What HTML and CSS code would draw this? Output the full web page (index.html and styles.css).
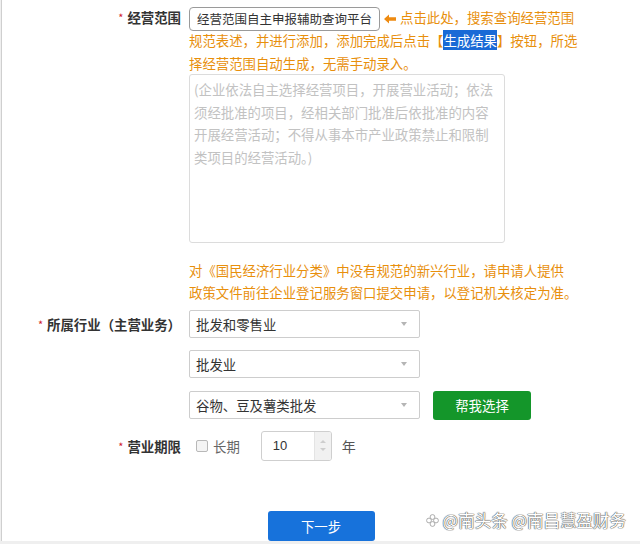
FILE: index.html
```html
<!DOCTYPE html>
<html lang="zh-CN">
<head>
<meta charset="utf-8">
<title>经营范围</title>
<link rel="stylesheet" href="styles.css">
</head>
<body>
<div class="page">
  <div class="row row-scope">
    <div class="label label-scope"><span class="req">*</span>经营范围</div>
    <div class="field">
      <p class="tip"><span class="platform">经营范围自主申报辅助查询平台</span><svg class="arrow" width="12" height="10" viewBox="0 0 12 10"><polygon points="0,5 5,0.5 5,3.2 12,3.2 12,6.8 5,6.8 5,9.5" fill="#ee8a10"/></svg>点击此处，搜索查询经营范围规范表述，并进行添加，添加完成后点击【<span class="hl">生成结果</span>】按钮，所选择经营范围自动生成，无需手动录入。</p>
      <textarea class="scope" placeholder="(企业依法自主选择经营项目，开展营业活动；依法须经批准的项目，经相关部门批准后依批准的内容开展经营活动；不得从事本市产业政策禁止和限制类项目的经营活动。)"></textarea>
      <p class="note">对《国民经济行业分类》中没有规范的新兴行业，请申请人提供<br>政策文件前往企业登记服务窗口提交申请，以登记机关核定为准。</p>
    </div>
  </div>

  <div class="row row-industry">
    <div class="label label-industry"><span class="req">*</span>所属行业（主营业务）</div>
    <div class="field selects">
      <div class="select"><span>批发和零售业</span><span class="caret"></span></div>
      <div class="select"><span>批发业</span><span class="caret"></span></div>
      <div class="select-line">
        <div class="select"><span>谷物、豆及薯类批发</span><span class="caret"></span></div>
        <div class="btn-green">帮我选择</div>
      </div>
    </div>
  </div>

  <div class="row row-term">
    <div class="label label-term"><span class="req">*</span>营业期限</div>
    <div class="field term">
      <span class="checkbox"></span>
      <span class="long">长期</span>
      <div class="number">
        <span class="num-val">10</span>
        <span class="spinner"><span class="up"></span><span class="down"></span></span>
      </div>
      <span class="year">年</span>
    </div>
  </div>

  <div class="btn-next">下一步</div>

  <div class="watermark"><svg class="wm-icon" width="13" height="13" viewBox="0 0 13 13"><g fill="#fff" stroke="#999" stroke-width="0.8"><circle cx="6.5" cy="3" r="2.4"/><circle cx="3" cy="6.5" r="2.4"/><circle cx="10" cy="6.5" r="2.4"/><circle cx="6.5" cy="10" r="2.4"/></g></svg><span>@南头条 @南昌慧盈财务</span></div>
</div>
</body>
</html>
```
FILE: styles.css
```css
html {
  background: #efefef;
}
body {
  margin: 0;
  font-family: "Noto Sans CJK SC", "Noto Sans", sans-serif;
  font-size: 13.4px;
  color: #333;
}
.page {
  position: relative;
  margin-left: 1px;
  border-left: 1px solid #cfcfcf;
  background: #fff;
  height: 541px;
  box-sizing: border-box;
  padding-top: 6px;
}
.row {
  display: grid;
  grid-template-columns: 179px 1fr;
  column-gap: 8px;
}
.label {
  text-align: right;
  font-weight: bold;
  color: #333;
  white-space: nowrap;
}
.req {
  color: #d0202a;
  font-weight: normal;
  font-size: 11px;
  margin-right: 4px;
  vertical-align: 1px;
}
.label-scope {
  line-height: 22.5px;
}
.tip {
  margin: 0;
  width: 394px;
  line-height: 22.5px;
  color: #e88f0c;
}
.platform {
  display: inline-block;
  box-sizing: border-box;
  height: 24px;
  line-height: 22px;
  padding: 0 7px;
  border: 1px solid #9a9a9a;
  border-radius: 4px;
  color: #333;
  font-size: 12.5px;
  vertical-align: middle;
  margin: -2px 4px -2px 0;
}
.arrow {
  vertical-align: -1px;
  margin-right: 4px;
}
.hl {
  background: #1a6ad6;
  color: #fff;
}
.scope {
  display: block;
  box-sizing: border-box;
  width: 316px;
  height: 169px;
  margin: 0;
  border: 1px solid #dcdcdc;
  border-radius: 3px;
  padding: 3px 4px;
  font-family: "Noto Sans CJK SC", sans-serif;
  font-size: 13.4px;
  line-height: 22.5px;
  color: #333;
  resize: none;
}
.scope::placeholder {
  color: #c2c2c2;
}
.note {
  margin: 17px 0 0;
  line-height: 21.5px;
  color: #e88f0c;
  white-space: nowrap;
}
.row-industry {
  margin-top: 6.5px;
}
.label-industry {
  line-height: 28px;
}
.selects {
  display: flex;
  flex-direction: column;
  gap: 12.5px;
}
.select {
  box-sizing: border-box;
  width: 231px;
  height: 28px;
  border: 1px solid #cdcdcd;
  border-radius: 2px;
  padding: 0 12px 0 6px;
  display: flex;
  align-items: center;
  justify-content: space-between;
  color: #333;
}
.caret {
  width: 0;
  height: 0;
  border-left: 3.5px solid transparent;
  border-right: 3.5px solid transparent;
  border-top: 4px solid #b5b5b5;
}
.select-line {
  display: flex;
  align-items: center;
  gap: 13px;
}
.btn-green {
  width: 98px;
  height: 29px;
  background: #14962a;
  color: #fff;
  border-radius: 3px;
  display: flex;
  align-items: center;
  justify-content: center;
}
.row-term {
  margin-top: 11px;
}
.label-term {
  line-height: 30px;
}
.term {
  display: flex;
  align-items: center;
  height: 30px;
}
.checkbox {
  box-sizing: border-box;
  width: 12px;
  height: 12px;
  border: 1px solid #b8b8b8;
  border-radius: 2px;
  background: #f4f4f4;
  margin-left: 7px;
}
.long {
  margin-left: 5px;
  color: #666;
}
.number {
  box-sizing: border-box;
  width: 71px;
  height: 30px;
  margin-left: 21px;
  border: 1px solid #cfcfcf;
  border-radius: 3px;
  display: flex;
  align-items: center;
  justify-content: space-between;
  overflow: hidden;
}
.num-val {
  padding-left: 11px;
  font-family: "Liberation Sans", sans-serif;
  font-size: 13px;
  color: #333;
}
.spinner {
  width: 16px;
  height: 100%;
  background: #f1f1f1;
  border-left: 1px solid #e4e4e4;
  display: flex;
  flex-direction: column;
  align-items: center;
  justify-content: center;
  gap: 5px;
}
.up {
  width: 0;
  height: 0;
  border-left: 3px solid transparent;
  border-right: 3px solid transparent;
  border-bottom: 3px solid #cdcdcd;
}
.down {
  width: 0;
  height: 0;
  border-left: 3px solid transparent;
  border-right: 3px solid transparent;
  border-top: 3px solid #cdcdcd;
}
.year {
  margin-left: 10px;
  color: #555;
  font-size: 14px;
}
.btn-next {
  width: 107px;
  height: 30px;
  margin: 50px auto 0;
  background: #1772db;
  color: #fff;
  border-radius: 3px;
  display: flex;
  align-items: center;
  justify-content: center;
}
.watermark {
  position: absolute;
  right: 14px;
  bottom: 9px;
  display: flex;
  align-items: center;
  gap: 4px;
  font-size: 16.5px;
  color: #fff;
  text-shadow: 0 0 1px #555, 0 0 1px #555, 0 0 1px #555;
}
```
